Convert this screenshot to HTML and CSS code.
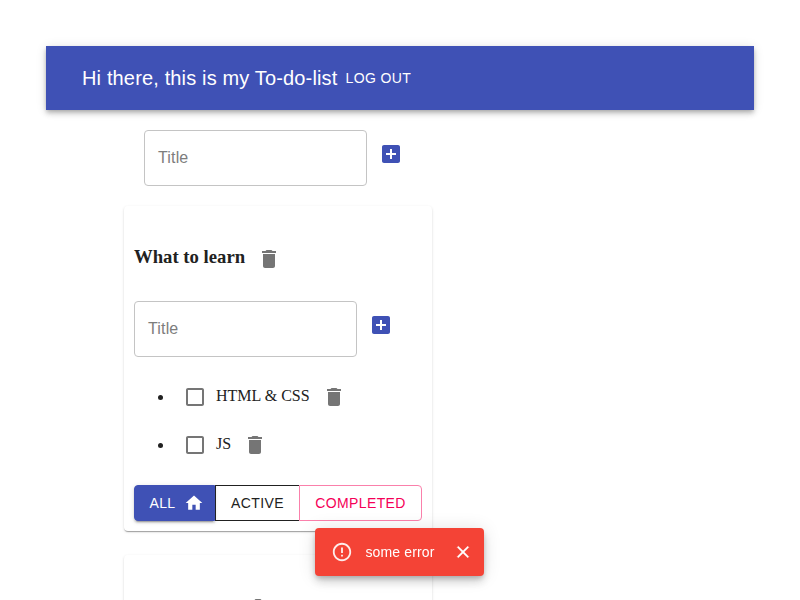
FILE: index.html
```html
<!DOCTYPE html>
<html lang="en">
<head>
<meta charset="utf-8">
<title>To-do list</title>
<link rel="stylesheet" href="styles.css">
</head>
<body>
<svg class="defs" aria-hidden="true">
<symbol id="add" viewBox="0 0 24 24"><path d="M19 3H5c-1.11 0-2 .9-2 2v14c0 1.1.89 2 2 2h14c1.1 0 2-.9 2-2V5c0-1.1-.9-2-2-2zm-2 10h-4v4h-2v-4H7v-2h4V7h2v4h4v2z"/></symbol>
<symbol id="del" viewBox="0 0 24 24"><path d="M6 19c0 1.100.9 2 2 2h8c1.100 0 2-.9 2-2V7H6v12zM19 4h-3.500l-1-1h-5l-1 1H5v2h14V4z"/></symbol>
<symbol id="box" viewBox="0 0 24 24"><path d="M19 5v14H5V5h14m0-2H5c-1.100 0-2 .9-2 2v14c0 1.100.9 2 2 2h14c1.100 0 2-.9 2-2V5c0-1.100-.9-2-2-2z"/></symbol>
</svg>
<header class="bar"><h1>Hi there, this is my To-do-list</h1><button class="logout">LOG OUT</button></header>
<main>
<div class="add-form top"><div class="field">Title</div><svg class="icon add"><use href="#add"/></svg></div>
<section class="card">
<h3><span>What to learn</span><svg class="icon"><use href="#del"/></svg></h3>
<div class="add-form"><div class="field">Title</div><svg class="icon add"><use href="#add"/></svg></div>
<ul>
<li class="task"><svg class="icon"><use href="#box"/></svg><span>HTML &amp; CSS</span><svg class="icon"><use href="#del"/></svg></li>
<li class="task"><svg class="icon"><use href="#box"/></svg><span>JS</span><svg class="icon"><use href="#del"/></svg></li>
</ul>
<div class="filters"><button class="all">ALL<svg viewBox="0 0 24 24"><path d="M10 20v-6h4v6h5v-8h3L12 3 2 12h3v8z"/></svg></button><button class="active">ACTIVE</button><button class="completed">COMPLETED</button></div>
</section>
<section class="card next"><h3><svg class="icon"><use href="#del"/></svg></h3></section>
</main>
<div class="alert"><svg class="warn" viewBox="0 0 24 24"><path d="M11 15h2v2h-2zm0-8h2v6h-2zm.99-5C6.470 2 2 6.480 2 12s4.470 10 9.990 10C17.520 22 22 17.520 22 12S17.520 2 11.990 2zM12 20c-4.420 0-8-3.580-8-8s3.580-8 8-8 8 3.580 8 8-3.580 8-8 8z"/></svg><span>some error</span><svg class="close" viewBox="0 0 24 24"><path d="M19 6.410L17.590 5 12 10.590 6.410 5 5 6.410 10.590 12 5 17.590 6.410 19 12 13.410 17.590 19 19 17.590 13.410 12z"/></svg></div>
</body>
</html>
```
FILE: styles.css
```css
* { box-sizing: border-box; }
html { overflow: hidden; }
body { margin: 0; padding: 46px 46px 0; height: 600px; overflow: hidden; font: 16px "Liberation Serif", serif; color: #212121; background: #fff; }
.defs { display: none; }
svg { fill: currentColor; flex: none; }
button { border: 0; background: none; padding: 0; color: inherit; font: 14px/24px "Liberation Sans", sans-serif; letter-spacing: .4px; }
.bar { height: 64px; display: flex; align-items: center; padding-left: 36px; background: #3f51b5; color: #fff; box-shadow: 0 2px 4px -1px rgba(0,0,0,.2), 0 4px 5px rgba(0,0,0,.14), 0 1px 10px rgba(0,0,0,.12); }
.bar h1 { margin: 0; font: 20px/32px "Liberation Sans", sans-serif; letter-spacing: .15px; }
.logout { margin-left: 8px; }
main { width: 308px; margin-left: 78px; }
.add-form { display: flex; }
.top { margin: 20px 0 20px 20px; }
.field { width: 223px; height: 56px; padding: 0 13px; border: 1px solid #c4c4c4; border-radius: 4px; color: #7d7d7d; font: 16px/54px "Liberation Sans", sans-serif; letter-spacing: .15px; }
.icon { width: 24px; height: 24px; color: #757575; }
.add { margin: 12px 0 0 12px; color: #3f51b5; }
.card { height: 325px; padding: 39px 10px 10px; margin-bottom: 24px; border-radius: 4px; box-shadow: 0 2px 1px -1px rgba(0,0,0,.2), 0 1px 1px rgba(0,0,0,.14), 0 1px 3px rgba(0,0,0,.12); }
h3 { display: flex; align-items: center; height: 24px; margin: 0 0 32px; font-size: 18.72px; }
h3 .icon { margin: 4px 0 0 12px; }
.next { height: 60px; margin-bottom: 0; overflow: hidden; }
.next h3 { padding-left: 100px; }
ul { list-style: none; margin: 16px 0; padding-left: 24px; }
.task { display: flex; align-items: center; height: 48px; }
.task::before { content: ""; width: 5px; height: 5px; margin-right: 20px; border-radius: 50%; background: #212121; }
.task span { margin: 0 12px 2px 9px; }
.filters { display: flex; margin-top: 16px; }
.filters button { height: 36px; border: 1px solid; display: flex; align-items: center; justify-content: center; }
.filters .all { width: 81px; padding-left: 4px; color: #fff; background: #3f51b5; border-color: #3f51b5; border-radius: 4px 0 0 4px; box-shadow: 0 3px 1px -2px rgba(0,0,0,.2), 0 2px 2px rgba(0,0,0,.14), 0 1px 5px rgba(0,0,0,.12); }
.all svg { width: 20px; height: 20px; margin-left: 8px; }
.filters .active { width: 84px; border-color: #212121; border-right: 0; }
.filters .completed { width: 123px; color: #f50057; border-color: #fa80ab; border-radius: 0 4px 4px 0; }
.alert { position: fixed; left: 315.400px; bottom: 24px; width: 169px; height: 48px; display: flex; align-items: center; padding-left: 16px; border-radius: 4px; background: #f44336; color: #fff; font: 14px "Liberation Sans", sans-serif; letter-spacing: .15px; box-shadow: 0 3px 5px -1px rgba(0,0,0,.2), 0 6px 10px rgba(0,0,0,.14), 0 1px 18px rgba(0,0,0,.12); }
.warn { width: 22px; height: 22px; margin-right: 12px; opacity: .9; }
.close { width: 20px; height: 20px; margin-left: 18px; stroke: #fff; stroke-width: .4px; }
```
